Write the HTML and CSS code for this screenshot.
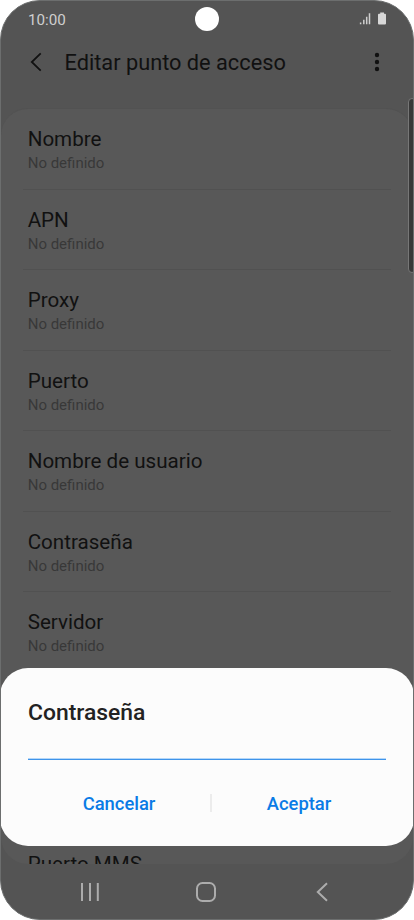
FILE: index.html
```html
<!DOCTYPE html>
<html lang="es">
<head>
  <meta charset="UTF-8">
  <meta name="viewport" content="width=device-width, initial-scale=1">
  <title>Editar punto de acceso</title>
  <link rel="stylesheet" href="styles.css">
</head>
<body>
  <div class="phone">
    <div class="status-bar">
      <span class="time">10:00</span>
      <span class="camera"></span>
      <svg class="status-icons" viewBox="0 0 28 14">
        <path d="M1.600 12.200V10.400M4.800 12.200V7.800M7.700 12.200V4.800M10.500 12.200V1.200" stroke="#cfcfcf" stroke-width="1.500"/>
        <path d="M21.200 1.700V.5h3.800v1.200h1q1 0 1 1v8.700q0 1-1 1h-6q-1 0-1-1V2.700q0-1 1-1z" fill="#d8d8d8"/>
      </svg>
    </div>

    <div class="header">
      <svg class="back" viewBox="0 0 12 20">
        <path d="M10.700 1.400L1.800 10L10.700 18.600" fill="none" stroke="#111" stroke-width="1.800"/>
      </svg>
      <h1>Editar punto de acceso</h1>
      <svg class="more" viewBox="0 0 6 20">
        <circle cx="3" cy="3" r="2.200"/>
        <circle cx="3" cy="10" r="2.200"/>
        <circle cx="3" cy="17" r="2.200"/>
      </svg>
    </div>

    <div class="list">
      <div class="item"><h2>Nombre</h2><p>No definido</p></div>
      <div class="item"><h2>APN</h2><p>No definido</p></div>
      <div class="item"><h2>Proxy</h2><p>No definido</p></div>
      <div class="item"><h2>Puerto</h2><p>No definido</p></div>
      <div class="item"><h2>Nombre de usuario</h2><p>No definido</p></div>
      <div class="item"><h2>Contraseña</h2><p>No definido</p></div>
      <div class="item"><h2>Servidor</h2><p>No definido</p></div>
      <div class="item last"><h2>Puerto MMS</h2></div>
    </div>

    <div class="nav-bar">
      <svg viewBox="0 0 20 20">
        <path d="M2 1v18M10 1v18M17.800 1v18"/>
      </svg>
      <svg viewBox="0 0 20 20">
        <rect x="1" y="1" width="18" height="18" rx="5.500"/>
      </svg>
      <svg viewBox="0 0 20 20">
        <path d="M15 1.200L5.800 10L15 18.800"/>
      </svg>
    </div>

    <div class="edge-handle"></div>

    <div class="dialog">
      <h3>Contraseña</h3>
      <div class="field"></div>
      <div class="buttons">
        <button>Cancelar</button>
        <span class="separator"></span>
        <button>Aceptar</button>
      </div>
    </div>
  </div>
</body>
</html>
```

FILE: styles.css
```css
* {
  box-sizing: border-box;
}
body {
  margin: 0;
  background: #fff;
  font-family: Roboto, "Liberation Sans", sans-serif;
}
h1, h2, h3, p {
  margin: 0;
  font-weight: 400;
  white-space: nowrap;
}
.phone {
  position: relative;
  display: flex;
  flex-direction: column;
  width: 414px;
  height: 920px;
  overflow: hidden;
  background: #545454;
  border: 1px solid #6c6e6e;
  border-radius: 40px;
}
.status-bar {
  display: grid;
  grid-template-columns: 1fr 24px 1fr;
  align-items: center;
  height: 36px;
  padding: 0 27px;
}
.time {
  padding-top: 1px;
  color: #cfcfcf;
  font-size: 15.2px;
}
.camera {
  width: 24px;
  height: 24px;
  border-radius: 50%;
  background: #fff;
}
.status-icons {
  justify-self: end;
  width: 28px;
  height: 14px;
  margin-right: -1px;
}
.header {
  display: flex;
  align-items: center;
  height: 49px;
  padding: 0 33px 0 29px;
}
.header h1 {
  flex: 1;
  margin-left: 22.5px;
  padding-top: 2px;
  color: #111;
  font-size: 21.75px;
}
.back {
  width: 12px;
  height: 20px;
}
.more {
  width: 6px;
  height: 20px;
  fill: #111;
}
.list {
  height: 756px;
  margin-top: 22px;
  overflow: hidden;
  background: #585858;
  border-top: 1px solid #525252;
  border-radius: 27px;
}
.item {
  height: 80.5px;
  margin: 0 22px;
  padding: 18px 4.7px 0;
  border-bottom: 1px solid #515151;
}
.item h2 {
  color: #111;
  font-size: 20.6px;
  line-height: 25px;
}
.item p {
  color: #383838;
  font-size: 15px;
  line-height: 22px;
}
.item.last {
  margin-top: 161px;
}
.nav-bar {
  display: flex;
  justify-content: space-between;
  height: 55px;
  padding: 18px 81px 0 79px;
}
.nav-bar svg {
  width: 20px;
  height: 20px;
  fill: none;
  stroke: #acacac;
  stroke-width: 2;
}
.edge-handle {
  position: absolute;
  top: 97px;
  right: -3px;
  width: 8px;
  height: 175px;
  background: #383838;
  border: 1px solid #777;
  border-radius: 4px;
}
/* dialog sits over the dimmed list */
.dialog {
  position: absolute;
  top: 667px;
  left: -1px;
  width: 414px;
  height: 178px;
  padding: 31px 28px 0;
  background: #fcfcfc;
  border-radius: 28px;
}
.dialog h3 {
  color: #222;
  font-size: 22.9px;
  font-weight: 500;
  line-height: 28px;
}
.field {
  height: 33px;
  border-bottom: 1px solid #3f94ea;
  box-shadow: inset 0 -1px #b5d7f8;
}
.buttons {
  display: flex;
  align-items: center;
  height: 86px;
}
.buttons button {
  flex: 1;
  padding: 0;
  background: none;
  border: none;
  color: #0a7be6;
  font-family: inherit;
  font-size: 18.4px;
  font-weight: 500;
}
.buttons button:first-child {
  flex: 0 0 182px;
}
.separator {
  width: 2px;
  height: 18px;
  background: #ececec;
}
```
